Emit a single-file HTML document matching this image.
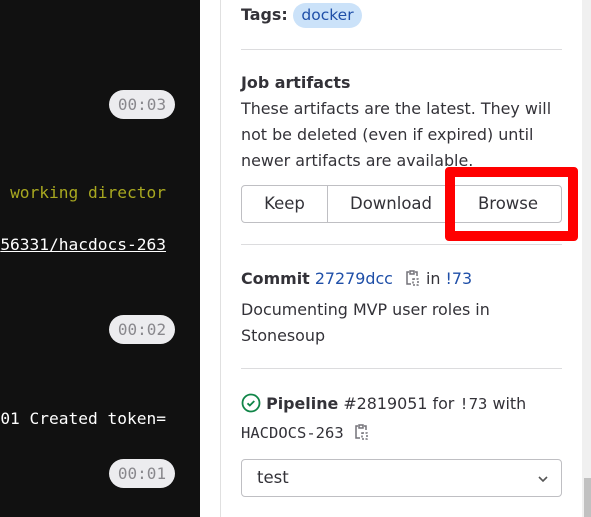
<!DOCTYPE html>
<html><head><meta charset="utf-8"><style>
*{margin:0;padding:0;box-sizing:border-box}
body{width:591px;height:517px;overflow:hidden;background:#fff;position:relative;font-family:"DejaVu Sans","Liberation Sans",sans-serif;color:#333238}
.a{position:absolute;white-space:nowrap}
.term{position:absolute;left:0;top:0;width:200px;height:517px;background:#111;overflow:hidden}
.mono{font-family:"DejaVu Sans Mono","Liberation Mono",monospace;font-size:16.2px}
.pill{position:absolute;left:109px;width:66px;height:29px;border-radius:15px;background:#ececef;color:#89888d;font-family:"DejaVu Sans Mono",monospace;font-size:16px;line-height:29px;text-align:center}
.hr{position:absolute;left:241px;width:321px;height:1px;background:#dcdcde}
.t{font-size:15.9px;line-height:26px}
b{font-weight:bold}
</style></head><body>
<div class="term">
<div class="pill" style="top:90px">00:03</div>
<div class="pill" style="top:315px">00:02</div>
<div class="pill" style="top:459px">00:01</div>
<div class="a mono" style="right:34px;top:183px;color:#a8a820">working director</div>
<div class="a mono" style="right:34px;top:235px;color:#fff;text-decoration:underline">56331/hacdocs-263</div>
<div class="a mono" style="right:34px;top:409px;color:#fff">01 Created token=</div>
</div>
<div style="position:absolute;left:220px;top:0;width:1px;height:517px;background:#e0e0e0"></div>
<div style="position:absolute;left:582px;top:0;width:9px;height:517px;background:#f0f0f0"></div>
<div style="position:absolute;left:584px;top:478px;width:7px;height:39px;background:#c1c1c1"></div>

<div class="a t" style="left:241px;top:2px"><b>Tags:</b></div>
<div class="a" style="left:293px;top:3px;width:69px;height:25px;border-radius:13px;background:#cbe2f9;color:#1f4fa8;font-size:15.5px;line-height:25px;text-align:center">docker</div>
<div class="hr" style="top:49px"></div>
<div class="a t" style="left:241px;top:70px"><b>Job artifacts</b></div>
<div class="a t" style="left:241px;top:96px">These artifacts are the latest. They will</div>
<div class="a t" style="left:241px;top:122px">not be deleted (even if expired) until</div>
<div class="a t" style="left:241px;top:148px">newer artifacts are available.</div>
<div class="a" style="left:241px;top:185px;width:321px;height:38px;border:1px solid #bfbfc3;border-radius:4px;display:flex;font-size:16.5px;line-height:36px;text-align:center">
<div style="width:86px;border-right:1px solid #bfbfc3">Keep</div>
<div style="width:127px;border-right:1px solid #bfbfc3">Download</div>
<div style="flex:1">Browse</div>
</div>
<div class="a" style="left:445px;top:167px;width:133px;height:74px;border:10px solid #f00;border-radius:4px"></div>
<div class="hr" style="top:244px"></div>
<div class="a t" style="left:241px;top:266px"><b>Commit</b> <span style="color:#1f4fa8">27279dcc</span>
<svg width="16" height="18" viewBox="0 0 16 18" style="vertical-align:-3px;margin:0 6px"><path d="M5 3H3v12h4M11 3h2v4M6 2h4v3H6z" fill="none" stroke="#737278" stroke-width="1.5"/><path d="M9 10h5v6H9z" fill="none" stroke="#737278" stroke-width="1.5" stroke-dasharray="2 1.5"/></svg>in <span style="color:#1f4fa8">!73</span></div>
<div class="a t" style="left:241px;top:297px">Documenting MVP user roles in</div>
<div class="a t" style="left:241px;top:323px">Stonesoup</div>
<div class="hr" style="top:368px"></div>
<div class="a t" style="left:241px;top:391px"><svg width="20" height="20" viewBox="0 0 20 20" style="vertical-align:-4px"><circle cx="10" cy="10" r="8.5" fill="none" stroke="#108548" stroke-width="1.8"/><path d="M6.5 10.3l2.3 2.2 4.5-4.5" fill="none" stroke="#108548" stroke-width="1.8"/></svg> <b>Pipeline</b> #2819051 for <span class="mono" style="font-size:15.5px">!73</span> with</div>
<div class="a" style="left:241px;top:421px;font-family:'DejaVu Sans Mono',monospace;font-size:15.5px;line-height:24px">HACDOCS-263 <svg width="16" height="18" viewBox="0 0 16 18" style="vertical-align:-3px"><path d="M5 3H3v12h4M11 3h2v4M6 2h4v3H6z" fill="none" stroke="#737278" stroke-width="1.5"/><path d="M9 10h5v6H9z" fill="none" stroke="#737278" stroke-width="1.5" stroke-dasharray="2 1.5"/></svg></div>
<div class="a" style="left:241px;top:459px;width:321px;height:38px;border:1px solid #bfbfc3;border-radius:4px;font-size:16.5px;line-height:36px;padding-left:15px">test
<svg width="12" height="8" viewBox="0 0 12 8" style="position:absolute;right:12px;top:15px"><path d="M2 2l4 4 4-4" fill="none" stroke="#555" stroke-width="1.6"/></svg></div>
</body></html>
